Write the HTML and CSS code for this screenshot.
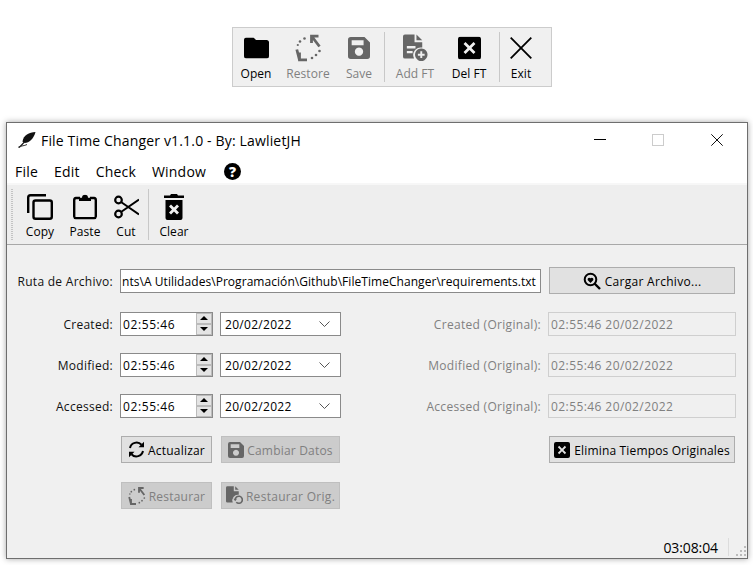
FILE: index.html
```html
<!DOCTYPE html>
<html lang="es">
<head>
<meta charset="utf-8">
<title>File Time Changer</title>
<link rel="stylesheet" href="styles.css">
</head>
<body>
<svg class="defs" width="0" height="0">
  <defs>
    <symbol id="i-restore" viewBox="0 0 27 27">
      <path d="M23.500 1.500H16.500V8.500M16.500 1.500 24.500 12" fill="none" stroke="currentColor" stroke-width="2.800"/>
      <path d="M4.500 18V25.500H12M4.500 25.500 1.800 15" fill="none" stroke="currentColor" stroke-width="2.800"/>
      <circle cx="9.500" cy="4" r="1.300" fill="currentColor"/><circle cx="5" cy="7" r="1.300" fill="currentColor"/><circle cx="2.800" cy="10.500" r="1.100" fill="currentColor"/>
      <circle cx="24.500" cy="16.500" r="1.300" fill="currentColor"/><circle cx="21" cy="20.500" r="1.300" fill="currentColor"/><circle cx="17" cy="23.500" r="1.300" fill="currentColor"/>
    </symbol>
    <symbol id="i-save" viewBox="0 0 24 24">
      <path fill-rule="evenodd" d="M3 0H18L24 6V21a3 3 0 0 1-3 3H3a3 3 0 0 1-3-3V3a3 3 0 0 1 3-3ZM4 3.500V9H17V3.500ZM12 11.500a4.500 4.500 0 1 0 .01 0Z" fill="currentColor"/>
    </symbol>
    <symbol id="i-box-x" viewBox="0 0 24 24">
      <path fill-rule="evenodd" d="M3 0H21a3 3 0 0 1 3 3V21a3 3 0 0 1-3 3H3a3 3 0 0 1-3-3V3a3 3 0 0 1 3-3ZM7.800 5.800 5.800 7.800 10 12 5.800 16.200 7.800 18.200 12 14 16.200 18.200 18.200 16.200 14 12 18.200 7.800 16.200 5.800 12 10Z" fill="currentColor"/>
    </symbol>
    <symbol id="i-file-plus" viewBox="0 0 26 28">
      <path fill-rule="evenodd" d="M2 0H12V8H20V13.500A8 8 0 0 0 11.500 25H2a2 2 0 0 1-2-2V2A2 2 0 0 1 2 0ZM14 0 20 6H14ZM4 12V14.500H13V12ZM4 17V19.500H10V17Z" fill="currentColor"/>
      <path fill-rule="evenodd" d="M19 14.500a6.500 6.500 0 1 0 .01 0ZM18 17.500h2V20h2.500v2H20v2.500h-2V22h-2.500v-2H18Z" fill="currentColor"/>
    </symbol>
    <symbol id="i-file-undo" viewBox="0 0 24 26">
      <path fill-rule="evenodd" d="M2 0H11V7H18V12A8 8 0 0 0 9.500 23H2a2 2 0 0 1-2-2V2A2 2 0 0 1 2 0ZM13 0 18 5H13Z" fill="currentColor"/>
      <path d="M13 19a5 5 0 1 1 1.500 3.600" fill="none" stroke="currentColor" stroke-width="2.200"/>
      <path d="M10.500 17.500h5l-2.500 3.500Z" fill="currentColor"/>
    </symbol>
  </defs>
</svg>

<nav class="floatbar">
  <div class="tool tool-44">
    <svg class="ico" width="25" height="21" viewBox="0 0 25 21"><path d="M2.500 0H9.500L12 2.500H22.500A2.500 2.500 0 0 1 25 5V18.500A2.500 2.500 0 0 1 22.500 21H2.500A2.500 2.500 0 0 1 0 18.500V2.500A2.500 2.500 0 0 1 2.500 0Z"/></svg>
    <span>Open</span>
  </div>
  <div class="tool tool-60 muted">
    <svg class="ico" width="27" height="27"><use href="#i-restore"/></svg>
    <span>Restore</span>
  </div>
  <div class="tool tool-42 muted">
    <svg class="ico" width="24" height="22"><use href="#i-save"/></svg>
    <span>Save</span>
  </div>
  <i class="vsep vsep-float sep-a"></i>
  <div class="tool tool-60 muted">
    <svg class="ico" width="25" height="28"><use href="#i-file-plus"/></svg>
    <span>Add FT</span>
  </div>
  <div class="tool tool-48">
    <svg class="ico" width="23" height="23"><use href="#i-box-x"/></svg>
    <span>Del FT</span>
  </div>
  <i class="vsep vsep-float sep-b"></i>
  <div class="tool tool-42">
    <svg class="ico" width="22" height="22" viewBox="0 0 22 22"><path d="M.7.7 21.300 21.300M21.300.7.7 21.300" stroke="#000" stroke-width="1.800" fill="none"/></svg>
    <span>Exit</span>
  </div>
</nav>

<main class="window">
  <header class="titlebar">
    <svg class="feather" width="18" height="16" viewBox="0 0 18 16"><path d="M17.500 0C11 .2 5.500 3 4.500 9.500L5.500 10.800C10.500 11.500 15.500 7.500 17.500 0Z" fill="#111"/><path d="M.5 15.500C3 14.800 4 12 6 10.500" fill="none" stroke="#111" stroke-width="1.300"/><path d="M1 15C4 13.500 6 14 9 12.500" fill="none" stroke="#333"/></svg>
    <span class="wintitle">File Time Changer v1.1.0 - By: LawlietJH</span>
    <svg class="winctl ctl-min" width="12" height="1" viewBox="0 0 12 1"><rect width="12" height="1" fill="#000"/></svg>
    <svg class="winctl ctl-max" width="12" height="12" viewBox="0 0 12 12"><rect x=".5" y=".5" width="11" height="11" fill="none" stroke="#ccc"/></svg>
    <svg class="winctl ctl-close" width="12" height="12" viewBox="0 0 12 12"><path d="M.3.3 11.700 11.700M11.700.3.3 11.700" stroke="#111" fill="none"/></svg>
  </header>
  <div class="menubar">
    <span>File</span><span>Edit</span><span>Check</span><span>Window</span>
    <b class="help">?</b>
  </div>
  <div class="mainbar">
    <i class="grip"></i>
    <div class="tool tool-44">
      <svg class="ico" width="26" height="26" viewBox="0 0 26 26"><path d="M1.200 19V3.500A2.300 2.300 0 0 1 3.500 1.200H19" fill="none" stroke="#000" stroke-width="2.400"/><rect x="6.500" y="6.500" width="18.300" height="18.300" rx="2" fill="none" stroke="#000" stroke-width="2.400"/></svg>
      <span>Copy</span>
    </div>
    <div class="tool tool-46">
      <svg class="ico" width="24" height="25" viewBox="0 0 24 25"><path d="M7 3.500H3A2 2 0 0 0 1.200 5.500V22A2 2 0 0 0 3 23.800H21A2 2 0 0 0 22.800 22V5.500A2 2 0 0 0 21 3.500H17" fill="none" stroke="#000" stroke-width="2.400"/><path d="M6 6.500V3.200H9A3 3 0 0 1 15 3.200H18V6.500Z" fill="#000"/></svg>
      <span>Paste</span>
    </div>
    <div class="tool tool-36">
      <svg class="ico cut" width="25" height="24" viewBox="0 0 25 24"><circle cx="4.500" cy="5" r="3.300" fill="none" stroke="#000" stroke-width="2.200"/><circle cx="4.500" cy="19" r="3.300" fill="none" stroke="#000" stroke-width="2.200"/><path d="M7 7 25 19.500M7 17 25 4.500" stroke="#000" stroke-width="2" fill="none"/></svg>
      <span>Cut</span>
    </div>
    <i class="vsep vsep-main"></i>
    <div class="tool tool-50">
      <svg class="ico" width="20" height="26" viewBox="0 0 20 26"><path fill-rule="evenodd" d="M7 0H13L14 1.500H20V4H0V1.500H6ZM1.500 6H18.500V24A2 2 0 0 1 16.500 26H3.500A2 2 0 0 1 1.500 24ZM7 10.500 5 12.500 8 15.500 5 18.500 7 20.500 10 17.500 13 20.500 15 18.500 12 15.500 15 12.500 13 10.500 10 13.500Z" fill="#000"/></svg>
      <span>Clear</span>
    </div>
  </div>
  <section class="form">
    <div class="row row-path">
      <label class="lbl">Ruta de Archivo:</label>
      <div class="field field-path"><span>nts\A Utilidades\Programación\Github\FileTimeChanger\requirements.txt</span></div>
      <button class="btn btn-load" type="button">
        <svg width="18" height="18" viewBox="0 0 18 18"><circle cx="7.500" cy="7.500" r="5.800" fill="none" stroke="#000" stroke-width="2"/><path d="M11.500 11.500 17 17" stroke="#000" stroke-width="2.400"/><path d="M7.500 11 4.800 8.200A1.700 1.700 0 0 1 7.500 6.200 1.700 1.700 0 0 1 10.200 8.200Z" fill="#000"/></svg>
        Cargar Archivo...
      </button>
    </div>

    <div class="row row-time">
      <label class="lbl">Created:</label>
      <div class="field field-time"><span>02:55:46</span><div class="spin"><i class="up"></i><i class="down"></i></div></div>
      <div class="field field-date"><span>20/02/2022</span><svg class="chev" width="11" height="6" viewBox="0 0 11 6"><path d="M.5.5 5.500 5.500 10.500.5" fill="none" stroke="#555"/></svg></div>
      <label class="lbl-orig">Created (Original):</label>
      <div class="field field-orig"><span>02:55:46 20/02/2022</span></div>
    </div>
    <div class="row row-time">
      <label class="lbl">Modified:</label>
      <div class="field field-time"><span>02:55:46</span><div class="spin"><i class="up"></i><i class="down"></i></div></div>
      <div class="field field-date"><span>20/02/2022</span><svg class="chev" width="11" height="6" viewBox="0 0 11 6"><path d="M.5.5 5.500 5.500 10.500.5" fill="none" stroke="#555"/></svg></div>
      <label class="lbl-orig">Modified (Original):</label>
      <div class="field field-orig"><span>02:55:46 20/02/2022</span></div>
    </div>
    <div class="row row-time">
      <label class="lbl">Accessed:</label>
      <div class="field field-time"><span>02:55:46</span><div class="spin"><i class="up"></i><i class="down"></i></div></div>
      <div class="field field-date"><span>20/02/2022</span><svg class="chev" width="11" height="6" viewBox="0 0 11 6"><path d="M.5.5 5.500 5.500 10.500.5" fill="none" stroke="#555"/></svg></div>
      <label class="lbl-orig">Accessed (Original):</label>
      <div class="field field-orig"><span>02:55:46 20/02/2022</span></div>
    </div>

    <div class="row row-btn">
      <button class="btn btn-a" type="button">
        <svg width="17" height="17" viewBox="0 0 17 17"><path d="M2 7A6.700 6.700 0 0 1 13.500 3.800M15 10A6.700 6.700 0 0 1 3.500 13.200" fill="none" stroke="#000" stroke-width="2"/><path d="M16 .8V6.300H10.500ZM1 16.200V10.700H6.500Z" fill="#000"/></svg>
        Actualizar
      </button>
      <button class="btn btn-b off" type="button"><svg width="16" height="16"><use href="#i-save"/></svg> Cambiar Datos</button>
      <button class="btn btn-del" type="button"><svg width="16" height="16"><use href="#i-box-x"/></svg> Elimina Tiempos Originales</button>
    </div>
    <div class="row row-btn row-btn2">
      <button class="btn btn-a off" type="button"><svg width="18" height="18"><use href="#i-restore"/></svg> Restaurar</button>
      <button class="btn btn-b off btn-orig" type="button"><svg class="undo" width="17" height="19"><use href="#i-file-undo"/></svg>Restaurar Orig.</button>
    </div>
  </section>
  <footer class="status">
    <span class="clock">03:08:04</span>
    <i class="status-sep"></i>
    <svg class="size-grip" width="11" height="11" viewBox="0 0 11 11"><g fill="#bbb"><rect x="8" width="2" height="2"/><rect x="4" y="4" width="2" height="2"/><rect x="8" y="4" width="2" height="2"/><rect y="8" width="2" height="2"/><rect x="4" y="8" width="2" height="2"/><rect x="8" y="8" width="2" height="2"/></g></svg>
  </footer>
</main>
</body>
</html>
```

FILE: styles.css
```css
* { box-sizing: border-box; }
html, body { height: 100%; }
body {
  margin: 0;
  background: #fff;
  font-family: "Open Sans", "Noto Sans", sans-serif;
  font-size: 12px;
  color: #000;
  overflow: hidden;
}
.defs { position: absolute; }

.floatbar {
  display: flex;
  align-items: stretch;
  width: 320px;
  height: 60px;
  margin: 27px 0 0 232px;
  padding-left: 1px;
  background: #f0f0f0;
  border: 1px solid #ccc;
}
.tool {
  position: relative;
  display: flex;
  flex-direction: column;
  align-items: center;
  flex: none;
  height: 100%;
}
.tool .ico { position: absolute; top: 50%; transform: translateY(-50%); margin-top: -9px; fill: currentColor; }
.mainbar .tool .ico { margin-top: -8px; }
.tool span {
  position: absolute;
  bottom: 4px;
  font-size: 12px;
  line-height: 16px;
  letter-spacing: .05px;
  white-space: nowrap;
}
.tool.muted { color: #666; }
.tool.muted span { color: #808080; }
.tool-36 { width: 36px; }
.tool-42 { width: 42px; }
.tool-44 { width: 44px; }
.tool-46 { width: 46px; }
.tool-48 { width: 48px; }
.tool-50 { width: 50px; }
.tool-60 { width: 60px; }

.vsep { display: block; flex: none; width: 1px; background: #c8c8c8; }
.vsep-float { margin-top: 4px; margin-bottom: 4px; }
.sep-a { margin-left: 4px; }
.sep-b { margin-left: 6px; }
.vsep-main { margin: 4px 0 4px 4px; }

.window {
  display: flex;
  flex-direction: column;
  width: 742px;
  height: 437px;
  margin: 35px 0 0 6px;
  background: #f0f0f0;
  border: 1px solid #6e6e6e;
  box-shadow: 0 0 6px rgba(0, 0, 0, .35);
}
.titlebar {
  position: relative;
  display: flex;
  align-items: center;
  flex: none;
  height: 36px;
  padding: 0 0 2px 11px;
  background: #fff;
}
.feather { flex: none; margin-right: 5px; }
.wintitle { font-size: 14px; letter-spacing: .16px; white-space: nowrap; }
.winctl { position: absolute; top: 11px; }
.ctl-min { left: 587px; top: 16px; }
.ctl-max { left: 645px; }
.ctl-close { left: 704px; }

.menubar {
  display: flex;
  align-items: center;
  flex: none;
  height: 26px;
  padding: 1px 0 0 8px;
  background: #fff;
  border-bottom: 2px solid #f7f7f7;
  font-size: 14px;
}
.menubar span { margin-right: 16px; letter-spacing: .2px; }
.help {
  display: flex;
  align-items: center;
  justify-content: center;
  width: 17px;
  height: 17px;
  margin: -1px 0 0 2px;
  border-radius: 50%;
  background: #000;
  color: #fff;
  font-size: 14px;
  font-weight: 800;
}

.mainbar {
  display: flex;
  align-items: stretch;
  flex: none;
  height: 60px;
  background: #eee;
  border-bottom: 1px solid #a8a8a8;
}
.grip {
  flex: none;
  width: 2px;
  margin: 4px 5px 4px 4px;
  background: repeating-linear-gradient(#c4c4c4 0 1px, transparent 1px 2px);
}

.form { flex: 1; padding-top: 22px; }
.row { display: flex; align-items: center; }
.lbl {
  flex: none;
  width: 106px;
  margin-right: 7px;
  text-align: right;
  letter-spacing: .28px;
  color: #111;
}
.field {
  display: flex;
  align-items: center;
  height: 24px;
  background: #fff;
  border: 1px solid #8a8a8a;
  white-space: nowrap;
  overflow: hidden;
}
.row-path { height: 27px; }
.row-path .lbl { padding-top: 1px; }
.field-path { flex: none; width: 421px; margin-right: 8px; padding: 1px 0 0 1px; }
.field-path span { letter-spacing: .05px; }
.row-time { margin-top: 18px; height: 24px; }
.row-time + .row-time { margin-top: 17px; }
.field-time { position: relative; flex: none; width: 93px; margin-right: 7px; padding-left: 2px; letter-spacing: .6px; }
.spin {
  position: absolute;
  top: 0;
  right: 0;
  display: flex;
  flex-direction: column;
  width: 16px;
  height: 22px;
  background: #e4e4e4;
}
.spin i { position: relative; flex: 1; display: block; border: 1px solid #bbb; }
.spin i::after {
  content: "";
  position: absolute;
  left: 3px;
  top: 2px;
  border-left: 4px solid transparent;
  border-right: 4px solid transparent;
}
.spin .up::after { border-bottom: 4px solid #000; }
.spin .down::after { border-top: 4px solid #000; }
.field-date { flex: none; width: 121px; padding: 0 10px 0 4px; justify-content: space-between; letter-spacing: .3px; }
.lbl-orig {
  flex: 1;
  margin-right: 7px;
  text-align: right;
  color: #808080;
  letter-spacing: .3px;
  white-space: nowrap;
}
.field-orig {
  flex: none;
  width: 188px;
  margin-right: 11px;
  padding-left: 2px;
  background: #f0f0f0;
  border-color: #cfcfcf;
  color: #808080;
  letter-spacing: .42px;
}

.btn {
  display: flex;
  align-items: center;
  justify-content: center;
  flex: none;
  gap: 3px;
  height: 27px;
  padding: 1px 0 0;
  background: #e1e1e1;
  border: 1px solid #adadad;
  font: inherit;
  letter-spacing: .2px;
  color: #000;
  white-space: nowrap;
}
.btn svg { flex: none; color: #000; margin-top: -1px; }
.btn.off { background: #ccc; border-color: #bfbfbf; color: #808080; }
.btn.off svg { color: #666; }
.btn-load { width: 186px; gap: 4px; letter-spacing: .3px; }
.row-btn { margin-top: 18px; padding-left: 114px; }
.row-btn2 { margin-top: 19px; }
.btn-a { width: 91px; margin-right: 9px; }
.btn-b { width: 119px; }
.btn-orig { letter-spacing: .3px; }
.btn-del { width: 186px; margin-left: auto; margin-right: 12px; gap: 4px; letter-spacing: .17px; }
.undo { margin-right: 0; }

.status {
  position: relative;
  display: flex;
  align-items: center;
  justify-content: flex-end;
  flex: none;
  height: 22px;
  padding-right: 29px;
}
.clock { font-size: 14px; letter-spacing: -.1px; }
.status-sep {
  position: absolute;
  right: 18px;
  top: 2px;
  width: 1px;
  height: 18px;
  background: #dcdcdc;
}
.size-grip { position: absolute; right: 0; bottom: 1px; }
```
